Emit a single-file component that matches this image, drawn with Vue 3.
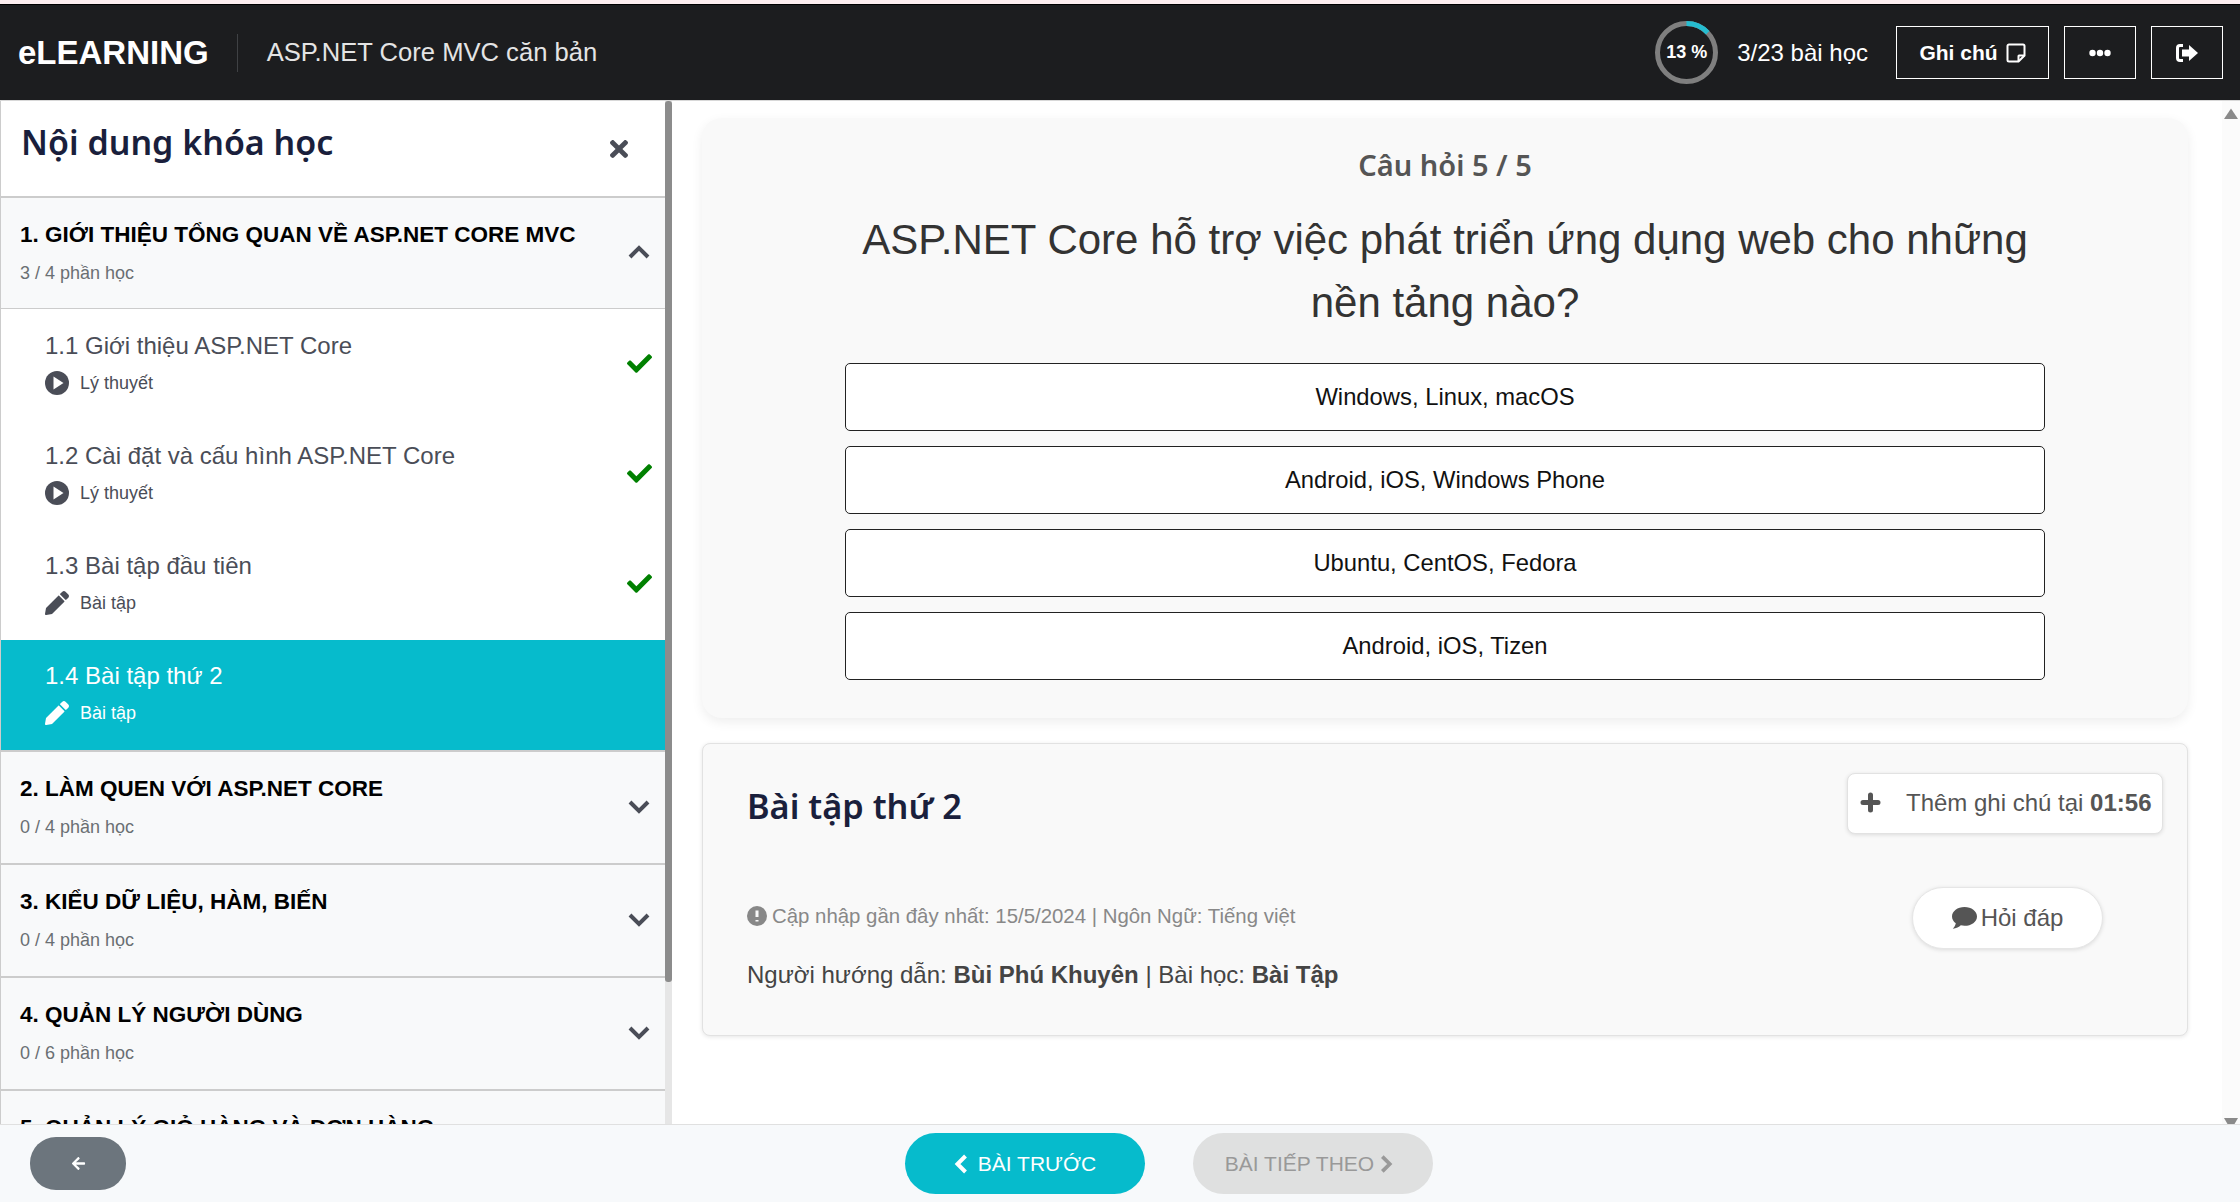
<script setup>
const percent = 13
const circumference = 2 * Math.PI * 29

const lessons = [
  { id: 1, title: '1.1 Giới thiệu ASP.NET Core', kind: 'Lý thuyết', icon: 'play', done: true },
  { id: 2, title: '1.2 Cài đặt và cấu hình ASP.NET Core', kind: 'Lý thuyết', icon: 'play', done: true },
  { id: 3, title: '1.3 Bài tập đầu tiên', kind: 'Bài tập', icon: 'pen', done: true },
  { id: 4, title: '1.4 Bài tập thứ 2', kind: 'Bài tập', icon: 'pen', done: false, active: true }
]

const sections = [
  { title: '2. LÀM QUEN VỚI ASP.NET CORE', sub: '0 / 4 phần học' },
  { title: '3. KIỂU DỮ LIỆU, HÀM, BIẾN', sub: '0 / 4 phần học' },
  { title: '4. QUẢN LÝ NGƯỜI DÙNG', sub: '0 / 6 phần học' },
  { title: '5. QUẢN LÝ GIỎ HÀNG VÀ ĐƠN HÀNG', sub: '0 / 5 phần học' }
]

const options = [
  'Windows, Linux, macOS',
  'Android, iOS, Windows Phone',
  'Ubuntu, CentOS, Fedora',
  'Android, iOS, Tizen'
]
</script>

<template>
  <div class="app">
    <div class="strip"></div>
    <header class="topbar">
      <div class="brand">eLEARNING</div>
      <div class="course-name">ASP.NET Core MVC căn bản</div>
      <div class="top-right">
        <div class="ring">
          <svg width="63" height="63" viewBox="0 0 63 63">
            <circle cx="31.5" cy="31.5" r="29" fill="none" stroke="#7f7f7f" stroke-width="5" />
            <circle
              cx="31.5"
              cy="31.5"
              r="29"
              fill="none"
              stroke="#26bdd0"
              stroke-width="5"
              transform="rotate(-90 31.5 31.5)"
              :stroke-dasharray="`${circumference * percent / 100} ${circumference}`"
            />
          </svg>
          <span class="ring-label">{{ percent }} %</span>
        </div>
        <div class="progress-text">3/23 bài học</div>
        <button class="top-btn note-btn">
          Ghi chú
          <svg width="20" height="20" viewBox="0 0 20 20" fill="none" stroke="#fff" stroke-width="2">
            <path d="M3 1.500h14a1.500 1.500 0 0 1 1.500 1.500v9.500l-6 6H3A1.500 1.500 0 0 1 1.500 17V3A1.500 1.500 0 0 1 3 1.500z" />
            <path d="M18.500 12.500H13a.5.5 0 0 0-.5.5v5.500" />
          </svg>
        </button>
        <button class="top-btn icon-btn">
          <svg width="22" height="8" viewBox="0 0 22 8" fill="#fff">
            <circle cx="3.5" cy="4" r="3.2" />
            <circle cx="11" cy="4" r="3.2" />
            <circle cx="18.5" cy="4" r="3.2" />
          </svg>
        </button>
        <button class="top-btn icon-btn">
          <svg width="22" height="18" viewBox="0 0 22 18" fill="#fff">
            <path d="M7 0H4a4 4 0 0 0-4 4v10a4 4 0 0 0 4 4h3v-3H4a1 1 0 0 1-1-1V4a1 1 0 0 1 1-1h3z" />
            <path d="M13 1l9 8-9 8v-4.500H6v-7h7z" />
          </svg>
        </button>
      </div>
    </header>

    <div class="body">
      <aside class="sidebar">
        <div class="side-title">
          <h2>Nội dung khóa học</h2>
          <svg class="close" width="18" height="18" viewBox="0 0 352 352" fill="#4a4d57">
            <path d="M242.720 176l100.070-100.070c12.280-12.280 12.280-32.190 0-44.480l-22.240-22.240c-12.280-12.280-32.190-12.280-44.480 0L176 109.280 75.930 9.210c-12.280-12.280-32.190-12.280-44.480 0L9.210 31.450c-12.280 12.280-12.280 32.190 0 44.480L109.280 176 9.210 276.070c-12.280 12.280-12.280 32.190 0 44.480l22.240 22.240c12.280 12.280 32.200 12.280 44.480 0L176 242.720l100.070 100.070c12.280 12.280 32.200 12.280 44.480 0l22.240-22.240c12.280-12.280 12.280-32.190 0-44.480z" />
          </svg>
        </div>

        <div class="section open">
          <div>
            <div class="section-title">1. GIỚI THIỆU TỔNG QUAN VỀ ASP.NET CORE MVC</div>
            <div class="section-sub">3 / 4 phần học</div>
          </div>
          <svg class="chevron" width="22" height="14" viewBox="0 0 22 14" fill="none" stroke="#4a4d57" stroke-width="4">
            <path d="M2 12l9-9 9 9" />
          </svg>
        </div>

        <div v-for="lesson in lessons" :key="lesson.id" class="lesson" :class="{ active: lesson.active }">
          <div>
            <div class="lesson-title">{{ lesson.title }}</div>
            <div class="lesson-kind">
              <svg v-if="lesson.icon === 'play'" width="24" height="24" viewBox="0 0 24 24">
                <circle cx="12" cy="12" r="12" fill="#4a4d57" />
                <path d="M8.500 5.500l10 6.500-10 6.500z" fill="#fff" />
              </svg>
              <svg v-else width="24" height="24" viewBox="0 0 512 512" class="pen">
                <path d="M497.900 142.100l-46.100 46.100c-4.700 4.700-12.300 4.700-17 0l-111-111c-4.700-4.700-4.700-12.300 0-17l46.100-46.100c18.700-18.700 49.100-18.700 67.900 0l60.100 60.100c18.800 18.700 18.800 49.100 0 67.900zM284.200 99.800L21.600 362.400.4 483.900c-2.900 16.400 11.400 30.600 27.800 27.800l121.500-21.300 262.600-262.600c4.700-4.700 4.700-12.300 0-17l-111-111c-4.800-4.700-12.400-4.700-17.100 0z" />
              </svg>
              <span>{{ lesson.kind }}</span>
            </div>
          </div>
          <svg v-if="lesson.done" class="check" width="25" height="25" viewBox="0 0 512 512" fill="#008000">
            <path d="M173.898 439.404l-166.400-166.400c-9.997-9.997-9.997-26.206 0-36.204l36.203-36.204c9.997-9.998 26.207-9.998 36.204 0L192 312.690 432.095 72.596c9.997-9.997 26.207-9.997 36.204 0l36.203 36.204c9.997 9.997 9.997 26.206 0 36.204l-294.400 294.401c-9.998 9.997-26.207 9.997-36.204-.001z" />
          </svg>
        </div>

        <div v-for="section in sections" :key="section.title" class="section">
          <div>
            <div class="section-title">{{ section.title }}</div>
            <div class="section-sub">{{ section.sub }}</div>
          </div>
          <svg class="chevron" width="22" height="14" viewBox="0 0 22 14" fill="none" stroke="#4a4d57" stroke-width="4">
            <path d="M2 2l9 9 9-9" />
          </svg>
        </div>
      </aside>

      <div class="side-scroll"><div class="side-thumb"></div></div>

      <main class="main">
        <section class="quiz-card">
          <div class="quiz-count">Câu hỏi 5 / 5</div>
          <div class="quiz-question">ASP.NET Core hỗ trợ việc phát triển ứng dụng web cho những nền tảng nào?</div>
          <div v-for="option in options" :key="option" class="option">{{ option }}</div>
        </section>

        <section class="info-card">
          <div class="info-top">
            <h2>Bài tập thứ 2</h2>
            <button class="add-note">
              <svg width="21" height="21" viewBox="0 0 21 21" stroke="#555" stroke-width="5" stroke-linecap="round">
                <path d="M10.500 3v15M3 10.500h15" />
              </svg>
              <span>Thêm ghi chú tại <b>01:56</b></span>
            </button>
          </div>
          <div class="info-bottom">
            <div>
              <div class="updated">
                <svg width="20" height="20" viewBox="0 0 20 20">
                  <circle cx="10" cy="10" r="10" fill="#888" />
                  <path d="M10 4.500v6.500M10 14v1.500" stroke="#f9f9f9" stroke-width="3" />
                </svg>
                Cập nhập gần đây nhất: 15/5/2024 | Ngôn Ngữ: Tiếng việt
              </div>
              <div class="teacher">Người hướng dẫn: <b>Bùi Phú Khuyên</b> | Bài học: <b>Bài Tập</b></div>
            </div>
            <button class="ask">
              <svg width="25" height="22" viewBox="0 0 25 22" fill="#555">
                <path d="M12.500 0C19.400 0 25 4.200 25 9.400s-5.600 9.400-12.500 9.400c-1.300 0-2.500-.15-3.700-.45C7.200 20 4.200 21.500.8 21.800c1.500-1.600 2.600-3.500 3-5.600C1.500 14.500 0 12.100 0 9.400 0 4.200 5.600 0 12.500 0z" />
              </svg>
              Hỏi đáp
            </button>
          </div>
        </section>
      </main>

      <div class="page-scroll">
        <svg width="14" height="11" viewBox="0 0 14 11" fill="#8a8a8a"><path d="M7 .5l7 10.500H0z" /></svg>
        <svg width="14" height="6" viewBox="0 0 14 6" fill="#8a8a8a"><path d="M0 0h14l-3.500 6h-7z" /></svg>
      </div>
    </div>

    <footer class="bottombar">
      <button class="back-btn">
        <svg width="15" height="15" viewBox="0 0 448 512" fill="#fff">
          <path d="M257.500 445.100l-22.200 22.200c-9.400 9.400-24.600 9.400-33.900 0L7 273c-9.400-9.400-9.400-24.600 0-33.900L201.400 44.700c9.400-9.400 24.600-9.400 33.900 0l22.200 22.200c9.500 9.500 9.300 25-.4 34.300L136.600 216H424c13.300 0 24 10.700 24 24v32c0 13.300-10.700 24-24 24H136.600l120.500 114.800c9.800 9.300 10 24.800.4 34.300z" />
        </svg>
      </button>
      <button class="nav-btn prev">
        <svg width="14" height="20" viewBox="0 0 14 20" fill="none" stroke="#fff" stroke-width="4"><path d="M11.500 2l-8 8 8 8" /></svg>
        BÀI TRƯỚC
      </button>
      <button class="nav-btn next">
        BÀI TIẾP THEO
        <svg width="13" height="20" viewBox="0 0 14 20" fill="none" stroke="#999" stroke-width="4"><path d="M2.500 2l8 8-8 8" /></svg>
      </button>
    </footer>
  </div>
</template>

<style>
html,
body {
  margin: 0;
  overflow: hidden;
  background: #fff;
}
</style>

<style scoped>
.app {
  width: 2240px;
  height: 1202px;
  display: flex;
  flex-direction: column;
  overflow: hidden;
  font-family: "Liberation Sans", Arial, sans-serif;
  color: #333;
}

button {
  font-family: inherit;
  cursor: pointer;
}

.strip {
  height: 4px;
  background: #fdeef0;
  flex: none;
}

.topbar {
  flex: none;
  box-sizing: border-box;
  height: 97px;
  display: flex;
  align-items: center;
  background: #1c1d1f;
  border-top: 1px solid #000;
  border-bottom: 1px solid #d8d8d8;
  color: #fff;
  padding: 0 17px 0 18px;
}

.brand {
  font-size: 33px;
  font-weight: 700;
  padding-right: 28px;
  line-height: 38px;
  border-right: 1px solid #3f4144;
}

.course-name {
  font-size: 25.6px;
  color: #e4e4e4;
  padding-left: 29px;
}

.top-right {
  margin-left: auto;
  display: flex;
  align-items: center;
}

.ring {
  display: grid;
  place-items: center;
  width: 63px;
  height: 63px;
  margin-right: 19px;
}

.ring svg,
.ring-label {
  grid-area: 1 / 1;
}

.ring-label {
  font-size: 18px;
  font-weight: 700;
}

.progress-text {
  font-size: 24px;
  margin-right: 28px;
}

.top-btn {
  box-sizing: border-box;
  height: 53px;
  background: transparent;
  border: 1px solid #fff;
  color: #fff;
  display: flex;
  align-items: center;
  justify-content: center;
  padding: 0;
}

.note-btn {
  width: 153px;
  gap: 8px;
  font-size: 21px;
  font-weight: 700;
}

.icon-btn {
  width: 72px;
  margin-left: 15px;
}

.body {
  flex: 1;
  min-height: 0;
  display: flex;
}

.sidebar {
  box-sizing: border-box;
  width: 665px;
  flex: none;
  overflow: hidden;
  border-left: 1px solid #ccc;
}

.side-title {
  box-sizing: border-box;
  height: 95px;
  display: flex;
  justify-content: space-between;
  padding: 18px 37px 0 20px;
}

.side-title h2 {
  margin: 0;
  font-family: "Noto Sans", sans-serif;
  font-size: 34px;
  line-height: 46px;
  font-weight: 600;
  color: #1a1f3c;
}

.close {
  margin-top: 21px;
}

.section {
  box-sizing: border-box;
  height: 113px;
  display: flex;
  justify-content: space-between;
  align-items: center;
  background: #f8f9fa;
  border-top: 2px solid #ccc;
  padding: 0 15px 2px 19px;
}

.section.open {
  border-bottom: 1px solid #ccc;
}

.section-title {
  font-size: 22.5px;
  line-height: 28px;
  font-weight: 700;
  color: #000;
}

.section-sub {
  margin-top: 13px;
  font-size: 18px;
  line-height: 22px;
  color: #6a6f73;
}

.chevron {
  flex: none;
}

.lesson {
  box-sizing: border-box;
  height: 110.25px;
  display: flex;
  justify-content: space-between;
  align-items: center;
  padding: 0 13px 2px 44px;
  color: #4a4d57;
}

.lesson.active {
  background: #06bbcc;
  color: #fff;
}

.lesson-title {
  font-size: 24px;
  line-height: 28px;
}

.lesson-kind {
  margin-top: 11px;
  display: flex;
  align-items: center;
  gap: 11px;
  font-size: 18px;
  line-height: 24px;
}

.pen {
  fill: #4a4d57;
}

.lesson.active .pen {
  fill: #fff;
}

.side-scroll {
  width: 7px;
  flex: none;
  background: #e6e6e6;
}

.side-thumb {
  height: 881px;
  background: #8c8c8c;
  border-radius: 3px;
}

.main {
  flex: 1;
  min-width: 0;
  padding: 17px 34px 0 30px;
}

.quiz-card {
  box-sizing: border-box;
  height: 600px;
  padding-top: 29px;
  background: #f9f9f9;
  border-radius: 20px;
  box-shadow: 0 4px 12px rgba(0, 0, 0, 0.07);
  text-align: center;
}

.quiz-count {
  font-family: "Noto Sans", sans-serif;
  font-size: 29px;
  line-height: 36px;
  font-weight: 600;
  color: #555;
}

.quiz-question {
  width: 1200px;
  margin: 25px auto 0;
  font-size: 42px;
  line-height: 63px;
  color: #333;
}

.option {
  box-sizing: border-box;
  width: 1200px;
  height: 68px;
  margin: 15px auto 0;
  display: flex;
  align-items: center;
  justify-content: center;
  background: #fff;
  border: 1.5px solid #222;
  border-radius: 5px;
  font-size: 23.8px;
  color: #111;
}

.quiz-question + .option {
  margin-top: 29px;
}

.info-card {
  box-sizing: border-box;
  height: 293px;
  margin-top: 25px;
  padding: 29px 24px 0 44px;
  background: #f9f9f9;
  border: 1px solid #e2e2e2;
  border-radius: 8px;
  box-shadow: 0 1px 4px rgba(0, 0, 0, 0.1);
}

.info-top {
  display: flex;
  justify-content: space-between;
  align-items: flex-start;
}

.info-top h2 {
  margin: 10px 0 0;
  font-family: "Noto Sans", sans-serif;
  font-size: 34.3px;
  line-height: 46px;
  font-weight: 600;
  color: #1a1f3c;
}

.add-note {
  box-sizing: border-box;
  width: 316px;
  height: 61px;
  display: flex;
  align-items: center;
  gap: 25px;
  padding: 0 0 2px 12px;
  background: #fff;
  border: 1px solid #e2e2e2;
  border-radius: 8px;
  box-shadow: 0 1px 4px rgba(0, 0, 0, 0.12);
  font-size: 24px;
  color: #555;
}

.info-bottom {
  display: flex;
  justify-content: space-between;
  align-items: flex-start;
  margin-top: 53px;
  padding-right: 60px;
}

.updated {
  height: 58px;
  display: flex;
  align-items: center;
  gap: 5px;
  font-size: 20.4px;
  color: #888;
}

.teacher {
  margin-top: 15px;
  font-size: 24px;
  line-height: 30px;
  color: #444;
}

.ask {
  box-sizing: border-box;
  width: 191px;
  height: 62px;
  display: flex;
  align-items: center;
  justify-content: center;
  gap: 4px;
  background: #fff;
  border: 1px solid #e6e6e6;
  border-radius: 31px;
  box-shadow: 0 1px 4px rgba(0, 0, 0, 0.12);
  font-size: 24px;
  color: #555;
}

.page-scroll {
  width: 18px;
  flex: none;
  background: #fbfbfb;
  display: flex;
  flex-direction: column;
  justify-content: space-between;
  align-items: center;
  padding-top: 7px;
  box-sizing: border-box;
}

.bottombar {
  flex: none;
  box-sizing: border-box;
  height: 78px;
  display: flex;
  align-items: center;
  background: #f7f9fb;
  border-top: 1px solid #e0e0e0;
  padding-left: 30px;
}

.back-btn {
  width: 96px;
  height: 53px;
  border: 0;
  border-radius: 26px;
  background: #6c757d;
  display: flex;
  align-items: center;
  justify-content: center;
  padding: 0;
}

.nav-btn {
  width: 240px;
  height: 61px;
  border: 0;
  border-radius: 31px;
  display: flex;
  align-items: center;
  justify-content: center;
  gap: 10px;
  font-size: 21px;
  padding: 0;
}

.prev {
  margin-left: 779px;
  background: #06bbcc;
  color: #fff;
}

.next {
  margin-left: 48px;
  padding-right: 8px;
  background: #dfe0e0;
  color: #999;
  gap: 6px;
}
</style>
